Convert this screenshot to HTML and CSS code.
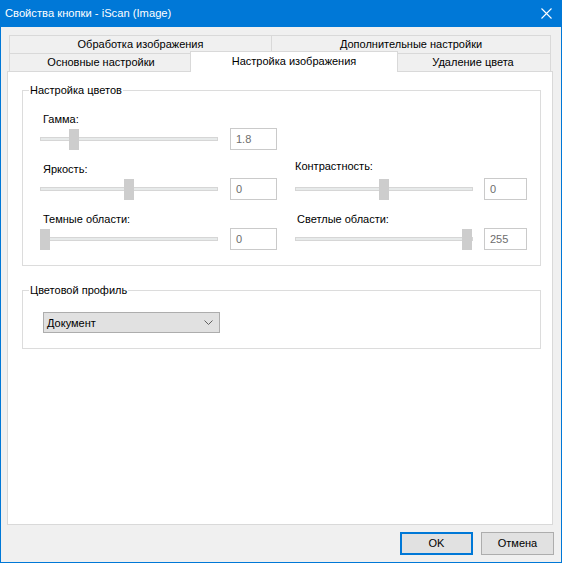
FILE: index.html
```html
<!DOCTYPE html>
<html lang="ru">
<head>
    <meta charset="UTF-8">
    <title>Свойства кнопки - iScan (Image)</title>
    <link rel="stylesheet" href="styles.css">
</head>
<body>
    <div class="window">
        <div class="titlebar">
            <span class="title">Свойства кнопки - iScan (Image)</span>
            <svg class="close" width="11" height="11" viewBox="0 0 11 11">
                <path d="M0.5 0.5 L10.5 10.5 M10.5 0.5 L0.5 10.5" stroke="#fff" stroke-width="1.1" fill="none"/>
            </svg>
        </div>

        <div class="dialog">
            <!-- вкладки в два ряда -->
            <div class="tabs">
                <div class="tab-row">
                    <div class="tab tab-proc">Обработка изображения</div>
                    <div class="tab tab-extra">Дополнительные настройки</div>
                </div>
                <div class="tab-row">
                    <div class="tab tab-main">Основные настройки</div>
                    <div class="tab tab-image active">Настройка изображения</div>
                    <div class="tab tab-drop">Удаление цвета</div>
                </div>
            </div>

            <div class="panel">
                <fieldset class="group">
                    <legend>Настройка цветов</legend>
                    <div class="group-body colors">
                        <div class="col col-left">
                            <div class="ctl">
                                <div class="ctl-label">Гамма:</div>
                                <div class="slider-row">
                                    <div class="slider">
                                        <div class="track"></div>
                                        <div class="thumb" style="left: 29px"></div>
                                    </div>
                                    <div class="edit">1.8</div>
                                </div>
                            </div>
                            <div class="ctl">
                                <div class="ctl-label">Яркость:</div>
                                <div class="slider-row">
                                    <div class="slider">
                                        <div class="track"></div>
                                        <div class="thumb" style="left: 84px"></div>
                                    </div>
                                    <div class="edit">0</div>
                                </div>
                            </div>
                            <div class="ctl">
                                <div class="ctl-label">Темные области:</div>
                                <div class="slider-row">
                                    <div class="slider">
                                        <div class="track"></div>
                                        <div class="thumb" style="left: 0px"></div>
                                    </div>
                                    <div class="edit">0</div>
                                </div>
                            </div>
                        </div>
                        <div class="col col-right">
                            <div class="ctl">
                                <div class="ctl-label">Контрастность:</div>
                                <div class="slider-row">
                                    <div class="slider">
                                        <div class="track"></div>
                                        <div class="thumb" style="left: 84px"></div>
                                    </div>
                                    <div class="edit">0</div>
                                </div>
                            </div>
                            <div class="ctl">
                                <div class="ctl-label">Светлые области:</div>
                                <div class="slider-row">
                                    <div class="slider">
                                        <div class="track"></div>
                                        <div class="thumb" style="left: 167px"></div>
                                    </div>
                                    <div class="edit">255</div>
                                </div>
                            </div>
                        </div>
                    </div>
                </fieldset>

                <fieldset class="group group-profile">
                    <legend>Цветовой профиль</legend>
                    <div class="group-body">
                        <div class="combo">
                            <span>Документ</span>
                            <svg width="9" height="5" viewBox="0 0 9 5">
                                <polyline points="0.5,0.5 4.5,4.5 8.5,0.5" stroke="#606060" fill="none"/>
                            </svg>
                        </div>
                    </div>
                </fieldset>
            </div>

            <div class="buttons">
                <div class="btn btn-default">OK</div>
                <div class="btn">Отмена</div>
            </div>
        </div>
    </div>
</body>
</html>
```

FILE: styles.css
```css
* {
    box-sizing: border-box;
}
body {
    margin: 0;
    font-family: "Segoe UI", "Liberation Sans", Arial, sans-serif;
    font-size: 11px;
    color: #000;
}
.window {
    width: 562px;
    height: 563px;
    display: flex;
    flex-direction: column;
    background: #f0f0f0;
    border: 1px solid #0078d7;
    border-top: none;
}
.titlebar {
    height: 27px;
    flex: none;
    margin: 0 -1px;
    background: #0078d7;
    color: #fff;
    display: flex;
    align-items: center;
    justify-content: space-between;
    padding-left: 5px;
    font-size: 11.2px;
}
.title {
    line-height: 27px;
}
.close {
    margin-right: 10px;
}
.dialog {
    flex: 1;
    display: flex;
    flex-direction: column;
    padding: 8px 8px 7px 6px;
}

/* вкладки */
.tabs {
    padding: 0 2px;
    flex: none;
}
.tab-row {
    display: flex;
    align-items: flex-start;
    height: 18px;
}
.tab {
    height: 18px;
    line-height: 17px;
    text-align: center;
    border: 1px solid #d9d9d9;
    border-bottom: none;
    background: #f0f0f0;
    white-space: nowrap;
}
.tab-proc { width: 263px; }
.tab-extra { width: 280px; margin-left: -1px; }
.tab-main { width: 184px; }
.tab-image { width: 208px; margin-left: -3px; }
.tab-drop { width: 156px; margin-left: -3px; }
.tab.active {
    position: relative;
    z-index: 1;
    height: 21px;
    margin-top: -2px;
    margin-bottom: -1px;
    background: #fff;
    line-height: 18px;
}

.panel {
    flex: 1;
    background: #fff;
    border: 1px solid #d9d9d9;
    padding-top: 11px;
}

/* группы */
.group {
    margin: 0 11px 0 14px;
    padding: 0;
    border: 1px solid #dcdcdc;
    min-width: 0;
}
.group legend {
    margin-left: 6px;
    padding: 0 1px;
    line-height: 14px;
}
.group-profile {
    margin-top: 17px;
}
.group-body {
    padding: 15px 0 15px 20px;
}
.colors {
    display: flex;
    gap: 18px;
    padding-left: 17px;
}
.col-right {
    padding-top: 47px;
}
.ctl + .ctl {
    margin-top: 12px;
}
.ctl-label {
    line-height: 14px;
    padding-left: 3px;
}
.col-right .ctl-label {
    padding-left: 0;
}
.col-right .ctl + .ctl .ctl-label {
    padding-left: 2px;
}
.slider-row {
    display: flex;
    align-items: center;
    gap: 12px;
    margin-top: 2px;
}
.col-right .ctl:first-child .slider-row {
    margin-top: 5px;
}
.col-right .slider-row {
    gap: 11px;
}
.slider {
    position: relative;
    width: 178px;
    height: 22px;
    display: flex;
    align-items: center;
}
.track {
    width: 100%;
    height: 4px;
    background: #e7eaea;
    border: 1px solid #d6d6d6;
}
.thumb {
    position: absolute;
    top: 1px;
    width: 10px;
    height: 21px;
    background: #cdcdcd;
}
.edit {
    width: 47px;
    height: 22px;
    border: 1px solid #cacaca;
    padding-left: 5px;
    line-height: 20px;
    color: #6d6d6d;
    background: #fff;
}
.col-right .edit {
    width: 43px;
}

.combo {
    width: 177px;
    height: 21px;
    background: #e1e1e1;
    border: 1px solid #adadad;
    display: flex;
    align-items: center;
    justify-content: space-between;
    padding: 0 6px 0 3px;
}

/* кнопки */
.buttons {
    flex: none;
    display: flex;
    justify-content: flex-end;
    gap: 8px;
    margin-top: 7px;
    margin-right: -1px;
}
.btn {
    width: 73px;
    height: 23px;
    line-height: 21px;
    text-align: center;
    background: #e1e1e1;
    border: 1px solid #adadad;
}
.btn-default {
    border: 2px solid #0078d7;
    line-height: 19px;
}
```
